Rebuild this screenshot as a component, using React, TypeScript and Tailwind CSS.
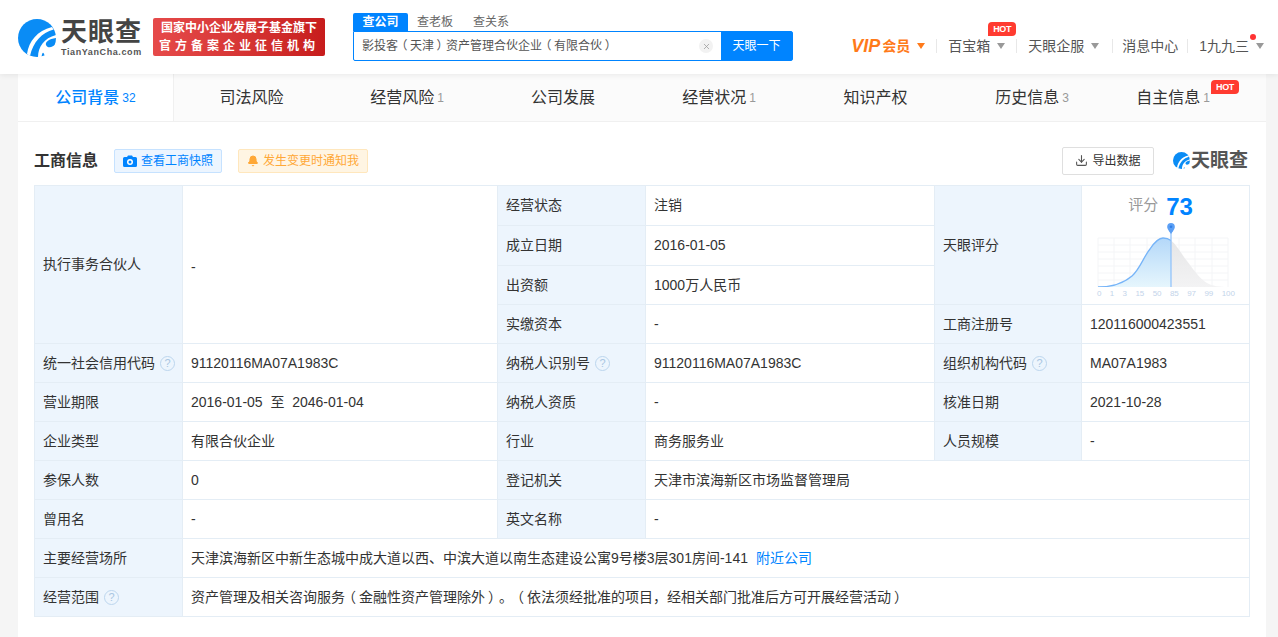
import { Bell, Download, X } from 'lucide-react';

const FONT = "font-['Liberation_Sans','Noto_Sans_CJK_SC',sans-serif]";

const TABS = [
    { label: '公司背景', count: '32', active: true, w: 'w-[156px]' },
    { label: '司法风险', w: 'w-[155px]' },
    { label: '经营风险', count: '1', w: 'w-[156px]' },
    { label: '公司发展', w: 'w-[156px]' },
    { label: '经营状况', count: '1', w: 'w-[156px]' },
    { label: '知识产权', w: 'w-[157px]' },
    { label: '历史信息', count: '3', w: 'w-[156px]' },
    { label: '自主信息', count: '1', hot: true, w: 'w-[156px] pr-[30px]' },
];

const SCORE_TICKS = ['0', '1', '3', '15', '50', '85', '97', '99', '100'];

// 괄호는 좁은 글리프로 바꿔 한 칸 가운데에 둔다
function Punct({ text }: { text: string }) {
    return (
        <>
            {text.split(/([（）])/).map((part, i) =>
                part === '（' || part === '）' ? (
                    <span key={i} className="inline-block w-[1em] text-center [font-feature-settings:'palt']">
                        {part}
                    </span>
                ) : (
                    part
                ),
            )}
        </>
    );
}

function LogoMark({ size }: { size: number }) {
    return (
        <svg width={size} height={size} viewBox="0 0 38 38">
            <circle cx="19" cy="19" r="19" fill="#0a8cf5" />
            <path d="M9 35 C11 22 19 12 34 8 L35.5 10.5 C24 13.5 15 23 12 37 Z" fill="#fff" />
            <path d="M20 38 C20 28 26 19 38 16 L38 19 C31 20 27 23 28 26 C29.5 29.5 34.5 29 38 24.5 C37 30 33 35 27 37.5 C25.5 33 24.5 32 23.5 38 Z" fill="#fff" />
        </svg>
    );
}

function Hot({ className }: { className: string }) {
    return (
        <span className={`absolute flex h-[14px] w-[28px] items-center justify-center rounded-t-[4px] rounded-br-[4px] bg-[#ff3b30] text-[9px] font-bold leading-none tracking-[-0.3px] text-white ${className}`}>
            HOT
        </span>
    );
}

function Caret({ color = 'border-t-[#999]' }: { color?: string }) {
    return <span className={`ml-[7px] inline-block h-0 w-0 border-x-[4px] border-t-[6px] border-x-transparent ${color}`} />;
}

function Divider() {
    return <span className="h-[14px] w-px bg-[#e8e8e8]" />;
}

function Help() {
    return (
        <span className="ml-[5px] inline-flex h-[15px] w-[15px] items-center justify-center rounded-full border border-[#bcd6ee] align-[1px] text-[11px] leading-none text-[#a9c6e2]">
            ?
        </span>
    );
}

function Label({ children, rowSpan }: { children: React.ReactNode; rowSpan?: number }) {
    return (
        <td rowSpan={rowSpan} className="whitespace-nowrap border border-[#e4edf5] bg-[#edf5fd] px-[8px] align-middle">
            {children}
        </td>
    );
}

function Value({ children, rowSpan, colSpan }: { children: React.ReactNode; rowSpan?: number; colSpan?: number }) {
    return (
        <td rowSpan={rowSpan} colSpan={colSpan} className="border border-[#e4edf5] px-[8px] align-middle">
            {children}
        </td>
    );
}

function ScoreChart() {
    return (
        <svg width="144" height="68" viewBox="0 0 144 68" className="ml-[12px] block">
            <defs>
                <linearGradient id="blueFill" x1="0" y1="0" x2="0" y2="1">
                    <stop offset="0" stopColor="#b4d8f9" />
                    <stop offset="1" stopColor="#e6f6fd" />
                </linearGradient>
                <linearGradient id="grayFill" x1="0" y1="0" x2="0" y2="1">
                    <stop offset="0" stopColor="#e6e6e7" />
                    <stop offset="1" stopColor="#f3f3f4" />
                </linearGradient>
            </defs>
            {[4, 20, 36, 53, 69, 85, 101, 118, 134].map((x) => (
                <line key={x} x1={x} y1="19" x2={x} y2="68" stroke="#f4f5f7" />
            ))}
            {[19, 26, 33, 40, 47, 54, 61].map((y) => (
                <line key={y} x1="4" y1={y} x2="134" y2={y} stroke="#f4f5f7" />
            ))}
            <path d="M77 68 L77 21.5 C83 26 88 36 93 42 C99 50 106 60 113 64 C118 67 126 68 134 68 Z" fill="url(#grayFill)" />
            <path d="M4 68 C20 68 30 64 38 57 C46 50 50 37 56 30 C60 24 64 19 69 19 C72 19 75 20 77 21.5 L77 68 Z" fill="url(#blueFill)" />
            <path d="M4 68 C20 68 30 64 38 57 C46 50 50 37 56 30 C60 24 64 19 69 19 C72 19 75 20 77 21.5" fill="none" stroke="#76b4f8" strokeWidth="1.3" />
            <line x1="77" y1="12" x2="77" y2="68" stroke="#8dc0fa" strokeWidth="1.2" />
            <path d="M77 15 C74 11 73.2 9.5 73.2 7.8 A3.8 3.8 0 0 1 80.8 7.8 C80.8 9.5 80 11 77 15Z" fill="#5b9ff5" />
            <circle cx="77" cy="7.8" r="1.3" fill="#2f7fe8" />
        </svg>
    );
}

export default function App() {
    return (
        <div className={`${FONT} h-[637px] w-[1278px] overflow-hidden bg-[#f5f5f5] text-[14px] text-[#333] [text-spacing-trim:space-all]`}>
            {/* 헤더 */}
            <header className="relative z-10 flex h-[74px] items-start bg-white shadow-[0_1px_6px_rgba(0,0,0,0.08)]">
                <div className="ml-[18px] mt-[18px] flex items-center">
                    <LogoMark size={38} />
                    <div className="ml-[5px] flex flex-col">
                        <span className="text-[26px] font-bold leading-[28px] tracking-[1px] text-[#444]">天眼查</span>
                        <span className="mt-[1px] text-[9px] font-bold leading-[11px] tracking-[0.6px] text-[#555]">TianYanCha.com</span>
                    </div>
                </div>
                <div className="ml-[11px] mt-[18px] flex h-[38px] w-[172px] flex-col items-center justify-center rounded-[2px] bg-gradient-to-r from-[#e64a4a] to-[#c71c1c] text-[12px] font-bold leading-[18px] text-white">
                    <span>国家中小企业发展子基金旗下</span>
                    <span className="tracking-[4px]">官方备案企业征信机构</span>
                </div>
                <div className="ml-[28px] mt-[13px] w-[440px]">
                    <div className="flex h-[18px] text-[12px] leading-[18px]">
                        <span className="w-[55px] rounded-t-[2px] bg-[#0084ff] text-center font-bold text-white">查公司</span>
                        <span className="ml-[9px] text-[#666]">查老板</span>
                        <span className="ml-[20px] text-[#666]">查关系</span>
                    </div>
                    <div className="flex h-[30px] rounded-b-[2px] rounded-r-[2px] border border-[#0084ff]">
                        <div className="flex flex-1 items-center pl-[8px] pr-[8px] text-[12px] text-[#555]">
                            <span className="flex-1 whitespace-nowrap">
                                <Punct text="影投客（天津）资产管理合伙企业（有限合伙）" />
                            </span>
                            <span className="flex h-[14px] w-[14px] items-center justify-center rounded-full bg-[#f2f2f2]">
                                <X size={9} className="text-[#999]" />
                            </span>
                        </div>
                        <button className="w-[71px] bg-[#0084ff] text-[12px] text-white">天眼一下</button>
                    </div>
                </div>
                <nav className="relative ml-auto mt-[37px] flex h-[18px] items-center pr-[14px] text-[14px] leading-[18px] text-[#555]">
                    <span className="flex items-center pr-[11px] text-[#ff7a1a]">
                        <span className="text-[18px] font-bold italic">VIP</span>
                        <span className="ml-[2px] font-bold">会员</span>
                        <Caret color="border-t-[#ff7a1a]" />
                    </span>
                    <Divider />
                    <span className="relative flex items-center pl-[11px] pr-[11px]">
                        百宝箱
                        <Caret />
                        <Hot className="left-[51px] top-[-15px]" />
                    </span>
                    <Divider />
                    <span className="flex items-center pl-[11px] pr-[13px]">
                        天眼企服
                        <Caret />
                    </span>
                    <Divider />
                    <span className="pl-[9px] pr-[9px]">消息中心</span>
                    <Divider />
                    <span className="relative flex items-center pl-[11px]">
                        1九九三
                        <Caret />
                        <span className="absolute right-[8px] top-[-3px] h-[6px] w-[6px] rounded-full bg-[#ff3333]" />
                    </span>
                </nav>
            </header>

            {/* 본문 카드 */}
            <main className="ml-[18px] mr-[12px] h-[563px] bg-white">
                <div className="flex h-[48px] border-b border-[#f0f0f0] bg-[#fbfbfb]">
                    {TABS.map((tab) => (
                        <div
                            key={tab.label}
                            className={`relative flex items-center justify-center ${tab.w} ${tab.active ? 'border-r border-[#f0f0f0] bg-white text-[#0084ff]' : 'text-[#333]'}`}
                        >
                            <span className={`text-[16px] ${tab.active ? 'font-medium' : ''}`}>{tab.label}</span>
                            {tab.count && (
                                <span className={`ml-[3px] text-[12px] ${tab.active ? 'text-[#0084ff]' : 'text-[#999]'}`}>{tab.count}</span>
                            )}
                            {tab.hot && <Hot className="right-[27px] top-[6px]" />}
                        </div>
                    ))}
                </div>

                <div className="px-[16px]">
                    <div className="flex h-[63px] items-center pt-[14px]">
                        <h2 className="text-[16px] font-bold">工商信息</h2>
                        <button className="ml-[16px] flex h-[24px] w-[108px] items-center justify-center rounded-[2px] border border-[#c6e2ff] bg-[#ecf5ff] text-[12px] text-[#0084ff]">
                            <svg width="14" height="12" viewBox="0 0 14 12" className="mr-[4px]">
                                <path d="M1.5 2 H4 L5 0.5 H9 L10 2 H12.5 A1.5 1.5 0 0 1 14 3.5 V10.5 A1.5 1.5 0 0 1 12.5 12 H1.5 A1.5 1.5 0 0 1 0 10.5 V3.5 A1.5 1.5 0 0 1 1.5 2Z" fill="#0084ff" />
                                <circle cx="7" cy="7" r="3" fill="#fff" />
                                <circle cx="7" cy="7" r="1.5" fill="#0084ff" />
                            </svg>
                            查看工商快照
                        </button>
                        <button className="ml-[16px] flex h-[24px] w-[130px] items-center justify-center rounded-[2px] border border-[#ffe7bd] bg-[#fff5e3] text-[12px] text-[#ffa836]">
                            <Bell size={12} fill="#ffa836" className="mr-[4px]" />
                            发生变更时通知我
                        </button>
                        <button className="ml-auto flex h-[28px] w-[92px] items-center justify-center rounded-[2px] border border-[#dfdfdf] text-[12px] text-[#333]">
                            <Download size={13} className="mr-[4px] text-[#555]" />
                            导出数据
                        </button>
                        <div className="ml-[19px] mr-[2px] flex items-center">
                            <LogoMark size={17} />
                            <span className="ml-[1px] text-[19px] font-bold leading-none text-[#555]">天眼查</span>
                        </div>
                    </div>

                    <table className="w-[1215px] table-fixed border-collapse">
                        <colgroup>
                            <col className="w-[148px]" />
                            <col className="w-[315px]" />
                            <col className="w-[148px]" />
                            <col className="w-[289px]" />
                            <col className="w-[147px]" />
                            <col className="w-[168px]" />
                        </colgroup>
                        <tbody>
                            <tr className="h-[40px]">
                                <Label rowSpan={4}>执行事务合伙人</Label>
                                <Value rowSpan={4}>
                                    <span className="relative top-[3px]">-</span>
                                </Value>
                                <Label>经营状态</Label>
                                <Value>注销</Value>
                                <Label rowSpan={3}>天眼评分</Label>
                                <td rowSpan={3} className="border border-[#e4edf5] p-0 align-top">
                                    <div className="flex h-[33px] items-center justify-center pr-[10px] pt-[8px]">
                                        <span className="mb-[2px] text-[15px] text-[#999]">评分</span>
                                        <span className="ml-[8px] text-[24px] font-bold leading-none text-[#0084ff]">73</span>
                                    </div>
                                    <ScoreChart />
                                    <div className="mt-[2px] flex w-[153px] justify-between pl-[15px] text-[8px] leading-[9px] text-[#c3d4ea]">
                                        {SCORE_TICKS.map((n) => (
                                            <span key={n}>{n}</span>
                                        ))}
                                    </div>
                                </td>
                            </tr>
                            <tr className="h-[40px]">
                                <Label>成立日期</Label>
                                <Value>2016-01-05</Value>
                            </tr>
                            <tr className="h-[39px]">
                                <Label>出资额</Label>
                                <Value>1000万人民币</Value>
                            </tr>
                            <tr className="h-[39px]">
                                <Label>实缴资本</Label>
                                <Value>-</Value>
                                <Label>工商注册号</Label>
                                <Value>120116000423551</Value>
                            </tr>
                            <tr className="h-[39px]">
                                <Label>统一社会信用代码<Help /></Label>
                                <Value>91120116MA07A1983C</Value>
                                <Label>纳税人识别号<Help /></Label>
                                <Value>91120116MA07A1983C</Value>
                                <Label>组织机构代码<Help /></Label>
                                <Value>MA07A1983</Value>
                            </tr>
                            <tr className="h-[39px]">
                                <Label>营业期限</Label>
                                <Value>2016-01-05&nbsp;&nbsp;至&nbsp;&nbsp;2046-01-04</Value>
                                <Label>纳税人资质</Label>
                                <Value>-</Value>
                                <Label>核准日期</Label>
                                <Value>2021-10-28</Value>
                            </tr>
                            <tr className="h-[39px]">
                                <Label>企业类型</Label>
                                <Value>有限合伙企业</Value>
                                <Label>行业</Label>
                                <Value>商务服务业</Value>
                                <Label>人员规模</Label>
                                <Value>-</Value>
                            </tr>
                            <tr className="h-[39px]">
                                <Label>参保人数</Label>
                                <Value>0</Value>
                                <Label>登记机关</Label>
                                <Value colSpan={3}>天津市滨海新区市场监督管理局</Value>
                            </tr>
                            <tr className="h-[39px]">
                                <Label>曾用名</Label>
                                <Value>-</Value>
                                <Label>英文名称</Label>
                                <Value colSpan={3}>-</Value>
                            </tr>
                            <tr className="h-[39px]">
                                <Label>主要经营场所</Label>
                                <Value colSpan={5}>
                                    天津滨海新区中新生态城中成大道以西、中滨大道以南生态建设公寓9号楼3层301房间-141
                                    <span className="ml-[8px] text-[#0084ff]">附近公司</span>
                                </Value>
                            </tr>
                            <tr className="h-[39px]">
                                <Label>经营范围<Help /></Label>
                                <Value colSpan={5}>
                                    <Punct text="资产管理及相关咨询服务（金融性资产管理除外）。（依法须经批准的项目，经相关部门批准后方可开展经营活动）" />
                                </Value>
                            </tr>
                        </tbody>
                    </table>
                </div>
            </main>
        </div>
    );
}
